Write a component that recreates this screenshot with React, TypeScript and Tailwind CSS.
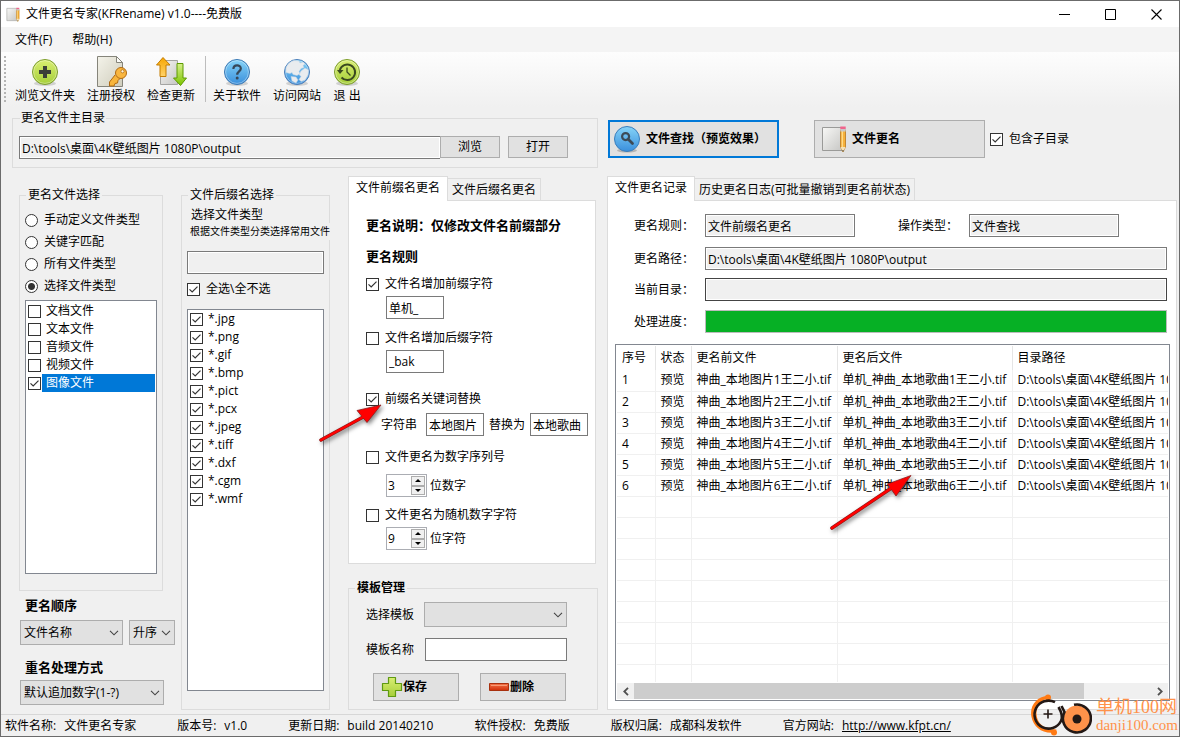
import { useState } from 'react';
import type { ReactNode } from 'react';

/* ---------- small building blocks ---------- */

const EDIT = 'h-[23px] min-w-0 border border-[#7a7a7a] px-[2px] leading-4 text-black outline-none';
const EDIT_OFF = EDIT + ' bg-[#f0f0f0] shadow-[inset_0_0_0_1px_#ffffff]';
const PUSH = 'flex items-center border border-[#adadad] bg-[#e1e1e1] leading-4';

function Check({ label, on, className = 'gap-[6px]', textClass = '' }: { label: string; on?: boolean; className?: string; textClass?: string }) {
  return (
    <label className={'flex items-center leading-4 ' + className}>
      <span className="relative size-[13px] shrink-0">
        <input
          type="checkbox"
          defaultChecked={on}
          className="peer block size-[13px] appearance-none border border-[#333333] bg-white"
        />
        <svg viewBox="0 0 13 13" className="pointer-events-none absolute inset-0 hidden size-[13px] peer-checked:block">
          <path d="M2.5 6.3 5.2 9 10.5 3.6" fill="none" stroke="#333333" strokeWidth="1.2" />
        </svg>
      </span>
      <span className={'whitespace-nowrap ' + textClass}>{label}</span>
    </label>
  );
}

function Drop({ label, options, className }: { label: string; options: string[]; className: string }) {
  return (
    <span className={'relative block ' + className}>
      <select
        aria-label={label}
        className="block h-[25px] w-full appearance-none border border-[#adadad] bg-[#e1e1e1] pr-4 pl-[3px] leading-4 outline-none"
      >
        {options.map((o) => (
          <option key={o}>{o}</option>
        ))}
      </select>
      <svg viewBox="0 0 10 6" className="pointer-events-none absolute top-[10px] right-1 h-[6px] w-[10px]">
        <path d="M1 .8 5 4.8 9 .8" fill="none" stroke="#444444" strokeWidth="1.1" />
      </svg>
    </span>
  );
}

function Spin({ label, start }: { label: string; start: number }) {
  const [value, setValue] = useState(start);
  return (
    <span className="flex h-[23px] w-[41px] border border-[#abadb3] bg-white p-px">
      <input
        aria-label={label}
        value={value}
        onChange={(e) => setValue(Number(e.target.value) || 0)}
        className="w-[22px] min-w-0 flex-1 leading-4 outline-none"
      />
      <span className="flex w-[14px] flex-col">
        <button
          aria-label="增加"
          onClick={() => setValue(value + 1)}
          className="flex flex-1 items-center justify-center border border-[#adadad] bg-[#f0f0f0]"
        >
          <svg viewBox="0 0 6 3" className="h-[3px] w-[6px]">
            <path d="M0 3 3 0 6 3z" />
          </svg>
        </button>
        <button
          aria-label="减少"
          onClick={() => setValue(Math.max(0, value - 1))}
          className="flex flex-1 items-center justify-center border border-[#adadad] bg-[#f0f0f0]"
        >
          <svg viewBox="0 0 6 3" className="h-[3px] w-[6px]">
            <path d="M0 0 3 3 6 0z" />
          </svg>
        </button>
      </span>
    </span>
  );
}

function Tabs({ names }: { names: string[] }) {
  const [active, setActive] = useState(0);
  return (
    <div role="tablist" className="flex h-6 items-end">
      {names.map((name, i) => (
        <button
          key={name}
          role="tab"
          aria-selected={active === i}
          onClick={() => setActive(i)}
          className={
            active === i
              ? 'relative z-10 -mb-px h-[25px] border border-b-0 border-[#dcdcdc] bg-white px-[7px] pb-[2px] leading-4 whitespace-nowrap'
              : 'h-[22px] border border-b-0 border-l-0 border-[#dcdcdc] bg-[#f0f0f0] px-1 leading-4 whitespace-nowrap'
          }
        >
          {name}
        </button>
      ))}
    </div>
  );
}

function Arrow({ d, head, className, viewBox }: { d: string; head: string; className: string; viewBox: string }) {
  return (
    <svg viewBox={viewBox} className={'pointer-events-none absolute z-20 drop-shadow-[2px_2px_2px_rgba(0,0,0,0.5)] ' + className}>
      <path d={d} stroke="#8a1a1a" strokeWidth="3.6" strokeLinecap="round" />
      <path d={head} fill="#ff0000" stroke="#8a2020" strokeWidth=".8" strokeLinejoin="round" />
      <path d={d} stroke="#ff0000" strokeWidth="2.4" strokeLinecap="round" />
    </svg>
  );
}

/* ---------- icons ---------- */

function Gradients() {
  return (
    <svg className="absolute size-0" aria-hidden="true">
      <defs>
        <linearGradient id="lime" x1="0" y1="0" x2="0" y2="1">
          <stop offset="0" stopColor="#d9ee72" />
          <stop offset="1" stopColor="#a6cf3a" />
        </linearGradient>
        <linearGradient id="blue" x1="0" y1="0" x2="0" y2="1">
          <stop offset="0" stopColor="#86d4f8" />
          <stop offset="1" stopColor="#3a8fdc" />
        </linearGradient>
        <linearGradient id="paper" x1="0" y1="0" x2="1" y2="1">
          <stop offset="0" stopColor="#f8f8f6" />
          <stop offset="1" stopColor="#c6c6c4" />
        </linearGradient>
        <linearGradient id="cream" x1="0" y1="0" x2="1" y2="1">
          <stop offset="0" stopColor="#f4f3ea" />
          <stop offset="1" stopColor="#cfcdbc" />
        </linearGradient>
        <linearGradient id="amber" x1="0" y1="0" x2="0" y2="1">
          <stop offset="0" stopColor="#f7a600" />
          <stop offset="1" stopColor="#ffd36b" />
        </linearGradient>
        <linearGradient id="leaf" x1="0" y1="0" x2="0" y2="1">
          <stop offset="0" stopColor="#d6f08a" />
          <stop offset="1" stopColor="#7cc400" />
        </linearGradient>
        <linearGradient id="red" x1="0" y1="0" x2="0" y2="1">
          <stop offset="0" stopColor="#f4744a" />
          <stop offset="1" stopColor="#d02e08" />
        </linearGradient>
      </defs>
    </svg>
  );
}

function Disc({ fill, edge, children }: { fill: string; edge: string; children: ReactNode }) {
  return (
    <svg viewBox="0 0 32 32" className="size-8 shrink-0">
      <ellipse cx="16" cy="27.5" rx="11" ry="2.5" fill="#000" opacity=".15" />
      <circle cx="16" cy="16" r="12.5" fill={fill} stroke={edge} />
      <circle cx="16" cy="16" r="11.4" fill="none" stroke="#ffffff" strokeOpacity=".35" />
      {children}
    </svg>
  );
}

const AddIcon = () => (
  <Disc fill="url(#lime)" edge="#7c9c2c">
    <path d="M14 10h4v4h4v4h-4v4h-4v-4h-4v-4h4z" fill="#3b3f38" />
  </Disc>
);
const HelpIcon = () => (
  <Disc fill="url(#blue)" edge="#3a78b4">
    <path d="M12.4 13c0-5 7.4-4.600 7.4-.6 0 3-3.600 3-3.600 6.400" fill="none" stroke="#374858" strokeWidth="2.2" />
    <circle cx="16.2" cy="22" r="1.500" fill="#374858" />
  </Disc>
);
const GlobeIcon = () => (
  <Disc fill="url(#blue)" edge="#4a7cb8">
    <path
      d="M5 12c1-3.500 4-6.500 8-7.500l5 .5 1 2 3-1 2 2-2 1.500 1 2-3 1-2 3 1 2-3 2-4-1-1-2-2 1-4-1zM20 15l4-3 3.500 2-.5 5-3 5-4 1.500-2-2 2-3-2-2zM10 20.500l5 .5 2 3-2 3-4-2z"
      fill="#e9ecef"
      stroke="#c3d3e2"
      strokeWidth=".5"
    />
  </Disc>
);
const ExitIcon = () => (
  <Disc fill="url(#lime)" edge="#7c9c2c">
    <path d="M8.800 14A7.800 7.800 0 1 1 10.500 21.500" fill="none" stroke="#3b4a20" strokeWidth="2" />
    <path d="M6 14h6.500l-3.500 4z" fill="#3b4a20" />
    <path d="M16 11.500V16l3.500 3.500" fill="none" stroke="#3b4a20" strokeWidth="1.300" />
  </Disc>
);
const KeyIcon = () => (
  <svg viewBox="0 0 32 32" className="size-8">
    <path d="M2.500 .5h19l6 6v24h-25z" fill="url(#cream)" stroke="#85847a" />
    <path d="M21.500 .5v6h6z" fill="#fbfbf7" stroke="#85847a" />
    <path
      d="M20 19 14.500 26v4H19l1-2.500 2.500-.5.500-2.500 2-2"
      fill="#f8b53c"
      stroke="#b06a12"
      strokeLinejoin="round"
    />
    <circle cx="26" cy="17" r="5.500" fill="#f9b63f" stroke="#b06a12" />
    <circle cx="27.500" cy="15.300" r="1.600" fill="#fff4d8" stroke="#b06a12" strokeWidth=".8" />
  </svg>
);
const UpdateIcon = () => (
  <svg viewBox="0 0 32 32" className="size-8">
    <path d="M5.500 4.500h17v24h-17z" fill="url(#paper)" stroke="#a4a4a2" />
    <path d="M8 1.500 1.500 9H5v11.500h6V9h4z" fill="url(#amber)" stroke="#c47c00" strokeLinejoin="round" />
    <path d="M25.500 29.500 18.500 22H22V7.500h6V22h3.500z" fill="url(#leaf)" stroke="#5c9a00" strokeLinejoin="round" />
  </svg>
);
const SearchIcon = () => (
  <svg viewBox="0 0 28 28" className="size-7">
    <ellipse cx="14" cy="25.500" rx="10" ry="2" fill="#000" opacity=".2" />
    <circle cx="14" cy="14" r="12.500" fill="url(#blue)" stroke="#3a7ebc" />
    <circle cx="12.600" cy="11.600" r="3.500" fill="none" stroke="#3c4a56" strokeWidth="2.200" />
    <path d="m15.500 14.500 4 4" stroke="#3c4a56" strokeWidth="2.800" strokeLinecap="round" />
  </svg>
);
const RenameIcon = ({ className }: { className: string }) => (
  <svg viewBox="0 0 26 28" className={className}>
    <path d="M1.500 2.500h20v23h-20z" fill="url(#paper)" stroke="#9a9a98" />
    <path d="M19.500 5h5v17l-2.500 5-2.500-5z" fill="#f6b13a" stroke="#b8761a" strokeWidth=".8" />
    <path d="M21.300 6v16" stroke="#ffdf91" strokeWidth="1.200" />
    <path d="M19.300 1.500h5.400v3h-5.400z" fill="#f0648c" />
    <path d="M19.300 4h5.400v2.500h-5.400z" fill="#c8c8c8" />
    <path d="m19.500 22 2.500 5 2.500-5z" fill="#f4e2ba" />
    <path d="m21.200 25.300.8 1.700.8-1.700z" fill="#333333" />
  </svg>
);

/* ---------- data ---------- */

const KINDS = ['文档文件', '文本文件', '音频文件', '视频文件', '图像文件'];
const MODES = ['手动定义文件类型', '关键字匹配', '所有文件类型', '选择文件类型'];
const EXTS = ['*.jpg', '*.png', '*.gif', '*.bmp', '*.pict', '*.pcx', '*.jpeg', '*.tiff', '*.dxf', '*.cgm', '*.wmf'];
const HEADS = ['序号', '状态', '更名前文件', '更名后文件', '目录路径'];
const PATH = 'D:\\tools\\桌面\\4K壁纸图片 1080P\\output';
const ROWS = [1, 2, 3, 4, 5, 6].map((n) => [
  String(n),
  '预览',
  `神曲_本地图片${n}王二小.tif`,
  `单机_神曲_本地歌曲${n}王二小.tif`,
  PATH,
]);
const BLANK = [7, 8, 9, 10, 11, 12, 13, 14];
const STATUS: [string, string][] = [
  ['软件名称:', '文件更名专家'],
  ['版本号:', 'v1.0'],
  ['更新日期:', 'build 20140210'],
  ['软件授权:', '免费版'],
  ['版权归属:', '成都科发软件'],
];

/* ---------- window chrome ---------- */

function TitleBar() {
  return (
    <header className="flex h-[26px] items-center bg-white pl-[5px]">
      <RenameIcon className="h-[15px] w-[14px]" />
      <h1 className="ml-[6px] flex-1 leading-4">文件更名专家(KFRename) v1.0----免费版</h1>
      <button aria-label="最小化" className="flex h-full w-[46px] items-center justify-center">
        <svg viewBox="0 0 11 11" className="size-[11px]">
          <path d="M0 5.500h11" stroke="#000" />
        </svg>
      </button>
      <button aria-label="最大化" className="flex h-full w-[46px] items-center justify-center">
        <svg viewBox="0 0 11 11" className="size-[11px]">
          <path d="M.5.5h10v10H.5z" fill="none" stroke="#000" />
        </svg>
      </button>
      <button aria-label="关闭" className="flex h-full w-[46px] items-center justify-center">
        <svg viewBox="0 0 11 11" className="size-[11px]">
          <path d="m.5.5 10 10m0-10-10 10" stroke="#000" strokeWidth="1.100" />
        </svg>
      </button>
    </header>
  );
}

function Tool({ icon, label, className = '' }: { icon: ReactNode; label: string; className?: string }) {
  return (
    <button className={'flex flex-col items-center ' + className}>
      {icon}
      <span className="leading-4 whitespace-pre">{label}</span>
    </button>
  );
}

function ToolBar() {
  return (
    <div className="flex h-[55px] items-start gap-3 bg-linear-to-b from-[#fdfdfd] to-[#f0f0f0] pt-1 pl-[3px]">
      <span className="-mr-[3px] h-12 w-[2px] bg-[repeating-linear-gradient(#b4b4b4_0_2px,transparent_2px_4px)]" />
      <Tool icon={<AddIcon />} label="浏览文件夹" />
      <Tool icon={<KeyIcon />} label="注册授权" />
      <Tool icon={<UpdateIcon />} label="检查更新" />
      <span className="-mr-[5px] -ml-[2px] h-[46px] w-px bg-[#bdbdbd]" />
      <Tool icon={<HelpIcon />} label="关于软件" />
      <Tool icon={<GlobeIcon />} label="访问网站" />
      <Tool icon={<ExitIcon />} label="退 出" className="w-7" />
    </div>
  );
}

/* ---------- left side ---------- */

function SourceFolder() {
  return (
    <fieldset className="h-[58px] border border-[#dcdcdc] px-[6px]">
      <legend className="ml-px px-px leading-4">更名文件主目录</legend>
      <div className="flex pt-[10px]">
        <input aria-label="更名文件主目录" readOnly value={PATH} className={EDIT_OFF + ' flex-1 border-r-0'} />
        <button className={PUSH + ' h-[22px] w-[60px] justify-center'}>浏览</button>
        <button className={PUSH + ' mr-[23px] ml-2 h-[22px] w-[60px] justify-center'}>打开</button>
      </div>
    </fieldset>
  );
}

function FileKinds() {
  return (
    <div className="flex w-[156px] flex-col pt-[11px] pb-[5px]">
      <fieldset className="flex w-[144px] flex-1 flex-col border border-[#dcdcdc] px-[5px] pb-4">
        <legend className="ml-px px-[2px] leading-4">更名文件选择</legend>
        <div className="flex flex-col pt-[6px]">
          {MODES.map((m, i) => (
            <label key={m} className="flex h-[22px] items-center gap-[6px] leading-4">
              <input
                type="radio"
                name="mode"
                defaultChecked={i === 3}
                className="size-[13px] appearance-none rounded-full border border-[#333333] bg-white checked:bg-[radial-gradient(circle,#333333_3px,#ffffff_4px)]"
              />
              {m}
            </label>
          ))}
        </div>
        <div className="mt-[3px] flex w-[132px] flex-1 flex-col border border-[#828790] bg-white p-px">
          {KINDS.map((k, i) => (
            <Check
              key={k}
              label={k}
              on={i === 4}
              className="h-[18px] gap-px pl-px"
              textClass={i === 4 ? 'h-[18px] flex-1 bg-[#0078d7] pl-1 leading-[18px] text-white' : 'flex-1 pl-1'}
            />
          ))}
        </div>
      </fieldset>
      <div className="mt-[6px] pl-px">
        <h2 className="pl-[5px] text-[13px] leading-4 font-bold">更名顺序</h2>
        <div className="mt-[7px] flex gap-[6px]">
          <Drop label="更名顺序" options={['文件名称']} className="w-[103px]" />
          <Drop label="升序或降序" options={['升序', '降序']} className="w-[46px]" />
        </div>
        <h2 className="mt-[14px] pl-[5px] text-[13px] leading-4 font-bold">重名处理方式</h2>
        <Drop label="重名处理方式" options={['默认追加数字(1-?)']} className="mt-[5px] w-[144px]" />
      </div>
    </div>
  );
}

function Extensions() {
  return (
    <div className="flex w-[149px] flex-col pt-[11px]">
      <fieldset className="flex flex-1 flex-col border border-[#dcdcdc] px-[5px] pb-[18px]">
        <legend className="ml-px px-[2px] leading-4">文件后缀名选择</legend>
        <p className="mt-1 pl-1 leading-4">选择文件类型</p>
        <p className="-mr-[6px] overflow-hidden bg-[#f0f0f0] pl-[3px] text-[10px] leading-[17px] whitespace-nowrap">
          根据文件类型分类选择常用文件
        </p>
        <input aria-label="选择文件类型" readOnly className={EDIT_OFF + ' mt-[11px] w-[137px]'} />
        <Check label="全选\全不选" on className="mt-[7px] gap-[6px]" />
        <div className="mt-3 flex w-[137px] flex-1 flex-col border border-[#828790] bg-white px-[2px]">
          {EXTS.map((e) => (
            <Check key={e} label={e} on className="h-[18px] gap-[5px]" />
          ))}
        </div>
      </fieldset>
    </div>
  );
}

function Rules() {
  return (
    <section className="relative w-[248px]">
      <Tabs names={['文件前缀名更名', '文件后缀名更名']} />
      <div className="flex h-[364px] flex-col border border-[#dcdcdc] bg-white pl-[17px]">
        <h2 className="mt-4 text-[13px] leading-4 font-bold">更名说明：仅修改文件名前缀部分</h2>
        <h2 className="mt-[15px] text-[13px] leading-4 font-bold">更名规则</h2>
        <Check label="文件名增加前缀字符" on className="mt-3 gap-[6px]" />
        <input aria-label="前缀字符" defaultValue="单机_" className={EDIT + ' mt-1 ml-5 w-[58px]'} />
        <Check label="文件名增加后缀字符" className="mt-[11px] gap-[6px]" />
        <input aria-label="后缀字符" defaultValue="_bak" className={EDIT + ' mt-1 ml-5 w-[58px]'} />
        <Check label="前缀名关键词替换" on className="mt-[18px] gap-[6px]" />
        <div className="mt-[6px] ml-[15px] flex items-center">
          <label htmlFor="from" className="leading-4">
            字符串
          </label>
          <input id="from" defaultValue="本地图片" className={EDIT + ' ml-[9px] w-[58px]'} />
          <label htmlFor="to" className="ml-[5px] leading-4">
            替换为
          </label>
          <input id="to" defaultValue="本地歌曲" className={EDIT + ' ml-[5px] w-[58px]'} />
        </div>
        <Check label="文件更名为数字序列号" className="mt-[13px] gap-[6px]" />
        <div className="mt-[9px] ml-5 flex items-center gap-[3px] leading-4">
          <Spin label="位数字" start={3} />
          位数字
        </div>
        <Check label="文件更名为随机数字字符" className="mt-[10px] gap-[6px]" />
        <div className="mt-1 ml-5 flex items-center gap-[3px] leading-4">
          <Spin label="位字符" start={9} />
          位字符
        </div>
      </div>
      <Arrow
        viewBox="0 0 70 46"
        className="top-[224px] -left-[31px] h-[46px] w-[70px]"
        d="M4 40 48 16"
        head="M64 5 40 10.500 50 22.500z"
      />
    </section>
  );
}

function Templates() {
  return (
    <fieldset className="flex flex-1 flex-col border border-[#dcdcdc] pl-[17px]">
      <legend className="-ml-[11px] px-[2px] leading-4 font-bold">模板管理</legend>
      <div className="mt-[6px] flex items-center">
        <span className="w-[58px] leading-4">选择模板</span>
        <Drop label="选择模板" options={['']} className="w-[143px]" />
      </div>
      <div className="mt-[11px] flex items-center">
        <label htmlFor="tpl" className="w-[59px] leading-4">
          模板名称
        </label>
        <input id="tpl" className={EDIT + ' w-[142px] bg-white'} />
      </div>
      <div className="mt-3 ml-[7px] flex gap-[21px]">
        <button className={PUSH + ' h-7 w-[86px] pl-[7px] font-bold'}>
          <svg viewBox="0 0 22 22" className="size-[22px]">
            <path
              d="M7.500 1.500h7v6h6v7h-6v6h-7v-6h-6v-7h6z"
              fill="url(#lime)"
              stroke="#5f9a12"
              strokeWidth="1.200"
              strokeLinejoin="round"
            />
          </svg>
          保存
        </button>
        <button className={PUSH + ' h-7 w-[86px] pl-[7px] font-bold'}>
          <svg viewBox="0 0 22 22" className="size-[22px]">
            <path d="M1.500 7.500h19v7h-19z" fill="url(#red)" stroke="#a8300e" strokeLinejoin="round" />
            <path d="M3 9.500h16" stroke="#f79a74" />
          </svg>
          删除
        </button>
      </div>
    </fieldset>
  );
}

/* ---------- right side ---------- */

function Actions() {
  return (
    <div className="flex h-[38px] items-center">
      <button className="ml-px flex h-[38px] w-[171px] items-center border-2 border-[#0078d7] bg-[#e1e1e1] pl-[3px] leading-4 font-bold">
        <SearchIcon />
        <span className="ml-[5px]">文件查找（预览效果）</span>
      </button>
      <button className={PUSH + ' ml-[35px] h-[38px] w-[171px] pl-[6px] font-bold'}>
        <RenameIcon className="h-7 w-[26px]" />
        <span className="ml-[5px]">文件更名</span>
      </button>
      <Check label="包含子目录" on className="ml-[5px] gap-[6px]" />
    </div>
  );
}

function ResultTable() {
  return (
    <div className="mt-[11px] mr-[6px] ml-[7px] flex flex-1 flex-col border border-[#828790] bg-white p-px">
      <div className="flex-1 overflow-hidden">
        <table className="w-full table-fixed border-collapse text-left leading-4">
          <colgroup>
            <col className="w-[38px]" />
            <col className="w-[36px]" />
            <col className="w-[146px]" />
            <col className="w-[175px]" />
            <col />
          </colgroup>
          <thead>
            <tr className="h-6">
              {HEADS.map((h) => (
                <th key={h} className="border-r border-[#e5e5e5] pl-[5px] font-normal whitespace-nowrap last:border-r-0">
                  {h}
                </th>
              ))}
            </tr>
          </thead>
          <tbody>
            {ROWS.map((r) => (
              <tr key={r[0]} className="h-[21px]">
                {r.map((c, i) => (
                  <td key={i} className="overflow-hidden border-r border-b border-[#f0f0f0] pl-[5px] whitespace-nowrap last:border-r-0">
                    {c}
                  </td>
                ))}
              </tr>
            ))}
            {BLANK.map((n) => (
              <tr key={n} className="h-[21px]">
                {HEADS.map((h) => (
                  <td key={h} className="border-r border-b border-[#f0f0f0] last:border-r-0" />
                ))}
              </tr>
            ))}
            <tr className="h-[18px]">
              {HEADS.map((h) => (
                <td key={h} className="border-r border-[#f0f0f0] last:border-r-0" />
              ))}
            </tr>
          </tbody>
        </table>
      </div>
      <div className="flex h-4 items-center bg-[#f0f0f0]">
        <button aria-label="向左滚动" className="flex h-full w-[17px] items-center justify-center">
          <svg viewBox="0 0 6 9" className="h-[9px] w-[6px]">
            <path d="M5 .8 1.300 4.500 5 8.200" fill="none" stroke="#505050" strokeWidth="1.800" />
          </svg>
        </button>
        <div className="h-full flex-1">
          <div className="h-full w-[87%] bg-[#cdcdcd]" />
        </div>
        <button aria-label="向右滚动" className="flex h-full w-[17px] items-center justify-center">
          <svg viewBox="0 0 6 9" className="h-[9px] w-[6px]">
            <path d="M1 .8 4.700 4.500 1 8.200" fill="none" stroke="#505050" strokeWidth="1.800" />
          </svg>
        </button>
      </div>
    </div>
  );
}

function Records() {
  return (
    <section className="relative mt-[18px] flex flex-1 flex-col">
      <Tabs names={['文件更名记录', '历史更名日志(可批量撤销到更名前状态)']} />
      <div className="flex flex-1 flex-col border border-[#dcdcdc] bg-white pb-2">
        <div className="mt-[13px] mr-[9px] ml-[26px] flex items-center">
          <label htmlFor="rule" className="w-[71px] leading-4">
            更名规则：
          </label>
          <input id="rule" readOnly value="文件前缀名更名" className={EDIT_OFF + ' w-[150px]'} />
          <label htmlFor="kind" className="ml-[43px] w-[71px] leading-4">
            操作类型：
          </label>
          <input id="kind" readOnly value="文件查找" className={EDIT_OFF + ' w-[150px]'} />
        </div>
        <div className="mt-[10px] mr-[9px] ml-[26px] flex items-center">
          <label htmlFor="path" className="w-[71px] leading-4">
            更名路径：
          </label>
          <input id="path" readOnly value={PATH} className={EDIT_OFF + ' flex-1'} />
        </div>
        <div className="mt-2 mr-[9px] ml-[26px] flex items-center">
          <label htmlFor="dir" className="w-[71px] leading-4">
            当前目录：
          </label>
          <input
            id="dir"
            readOnly
            className="h-[23px] min-w-0 flex-1 border border-[#444444] bg-[#f0f0f0] px-[2px] shadow-[inset_0_0_0_1px_#ffffff] outline-none"
          />
        </div>
        <div className="mt-[9px] mr-[9px] ml-[26px] flex items-center">
          <span className="w-[71px] leading-4">处理进度：</span>
          <div role="progressbar" aria-label="处理进度" aria-valuenow={100} className="h-[23px] flex-1 border border-[#bcbcbc] bg-[#06b025]" />
        </div>
        <ResultTable />
      </div>
      <Arrow
        viewBox="0 0 90 62"
        className="top-[295px] left-[221px] h-[62px] w-[90px]"
        d="M4 57 68 14"
        head="M83 4.500 59.500 13 68 25z"
      />
    </section>
  );
}

/* ---------- footer ---------- */

function Watermark() {
  return (
    <div className="pointer-events-none absolute right-px bottom-0 flex items-center gap-1 text-[#ff924a]">
      <svg viewBox="0 0 62 42" className="h-[42px] w-[62px]" fill="none">
        <path d="M20 2C8 1-1 11 1.500 23c2 10 11 17.500 24 15.500l1-3C15 36 7 30 6.500 20 6 12 10 6 20 4z" fill="#ff7a14" />
        <circle cx="18" cy="3.500" r="3" fill="#ff7a14" />
        <circle cx="24" cy="38.500" r="3" fill="#ff7a14" />
        <path d="M25 8.200A14 14 0 1 0 31 27c1.500-3 1-8-2.500-14" stroke="#231815" strokeWidth="2.600" />
        <path d="M18 15.500v9M13.500 20h9" stroke="#231815" strokeWidth="1.600" />
        <circle cx="47" cy="25" r="13.500" fill="#ff924a" />
        <path d="M44 10.800A14 14 0 1 1 34.500 18l-3-6" stroke="#231815" strokeWidth="2.600" />
        <circle cx="47" cy="25" r="4.500" fill="#231815" />
      </svg>
      <div className="font-['Liberation_Serif','Noto_Sans_CJK_SC',serif]">
        <p className="text-[18px] leading-5">单机100网</p>
        <p className="text-[15px] leading-4">danji100.com</p>
      </div>
    </div>
  );
}

function StatusBar() {
  return (
    <footer className="relative flex h-[22px] items-center gap-[41px] border-t border-[#d7d7d7] pl-1 leading-4 whitespace-nowrap">
      {STATUS.map(([k, v]) => (
        <span key={k} className="flex gap-2">
          <span>{k}</span>
          <span>{v}</span>
        </span>
      ))}
      <span className="flex gap-2">
        <span>官方网站:</span>
        <a href="http://www.kfpt.cn/" className="underline">
          http://www.kfpt.cn/
        </a>
      </span>
      <Watermark />
    </footer>
  );
}

export default function App() {
  return (
    <div className="flex min-h-screen flex-col overflow-hidden border border-[#6b6b6b] bg-[#f0f0f0] font-['Open_Sans','Noto_Sans_CJK_SC',sans-serif] text-xs text-black">
      <Gradients />
      <TitleBar />
      <nav className="flex h-[25px] items-center gap-5 bg-[#f4f4f4] pl-[14px] leading-4">
        <button>文件(F)</button>
        <button>帮助(H)</button>
      </nav>
      <ToolBar />
      <main className="flex flex-1 pt-[3px] pr-[2px] pb-1 pl-[11px]">
        <div className="flex w-[586px] shrink-0 flex-col">
          <SourceFolder />
          <div className="mt-2 flex flex-1 pl-[7px]">
            <FileKinds />
            <div className="ml-[6px] flex">
              <Extensions />
            </div>
            <div className="ml-[18px] flex flex-1 flex-col gap-4">
              <Rules />
              <Templates />
            </div>
          </div>
        </div>
        <div className="ml-[9px] flex min-w-0 flex-1 flex-col pt-[10px]">
          <Actions />
          <Records />
        </div>
      </main>
      <StatusBar />
    </div>
  );
}
